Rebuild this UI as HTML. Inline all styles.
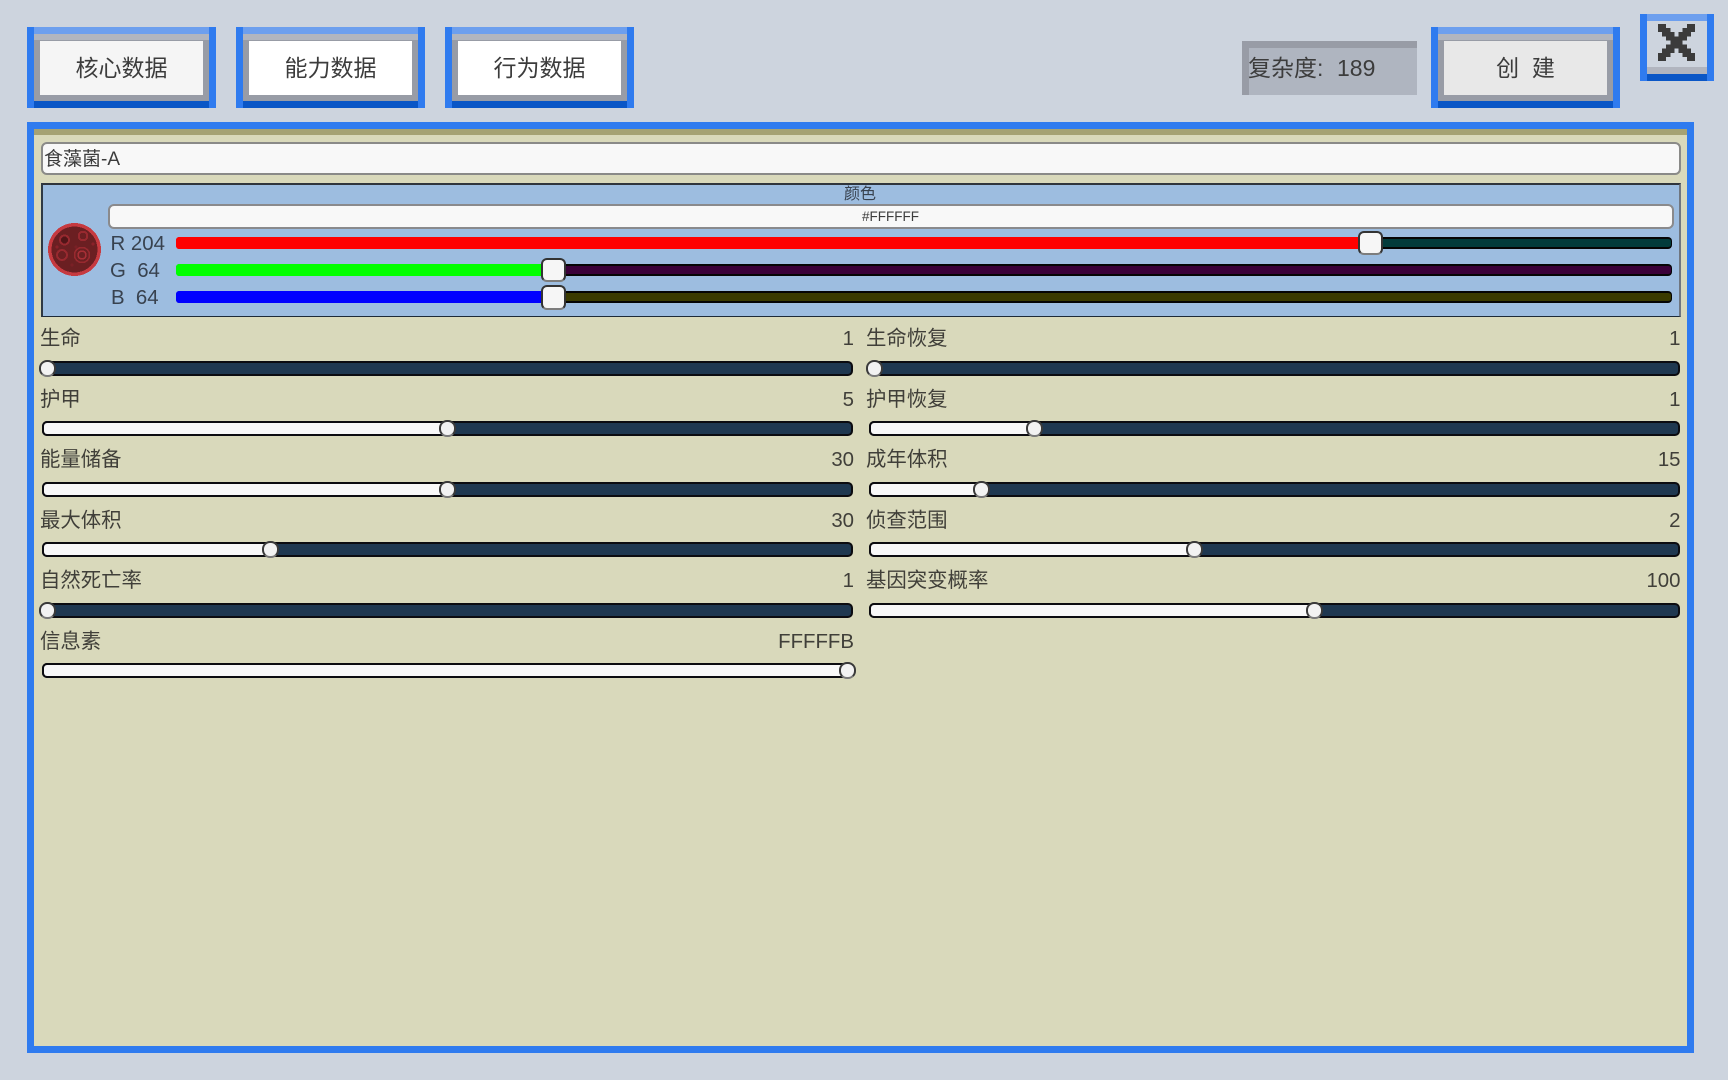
<!DOCTYPE html>
<html lang="zh">
<head>
<meta charset="utf-8">
<title>食藻菌-A</title>
<style>
html,body{margin:0;padding:0;width:1728px;height:1080px;overflow:hidden;background:#cdd4de;}
body{position:relative;font-family:"Liberation Sans","Noto Sans CJK SC",sans-serif;color:#3c3c3c;}
.a{position:absolute;box-sizing:border-box;}
.t{position:absolute;white-space:pre;line-height:1;}
.btn{position:absolute;top:27px;width:189px;height:81px;}
.btn i{position:absolute;display:block;}
.btn .l{left:0;top:0;width:7px;height:81px;background:#2f7bef;}
.btn .r{right:0;top:0;width:7px;height:81px;background:#2f7bef;}
.btn .tp{left:7px;right:7px;top:0;height:7px;background:#6d9fee;}
.btn .bt{left:7px;right:7px;bottom:0;height:7px;background:#0a56c6;}
.btn .g{left:7px;right:7px;top:7px;bottom:7px;background:#989ca6;}
.btn .g2{left:7px;right:7px;top:7px;height:6px;background:#b1b5bf;}
.btn .in{left:13px;right:13px;top:13.5px;bottom:13.5px;background:#f5f5f5;}
.btn span{position:absolute;left:0;right:0;top:28px;text-align:center;font-size:23px;line-height:27px;white-space:pre;}
.track{position:absolute;box-sizing:border-box;height:15px;background:#1f3850;border:2px solid #0c0c10;border-radius:5px;}
.fill{position:absolute;box-sizing:border-box;height:15px;background:#f8f8f8;border:2px solid #0c0c10;border-right:0;border-radius:5px 0 0 5px;}
.th{position:absolute;box-sizing:border-box;width:17px;height:17px;background:#f2f2f2;border:2px solid #3a3a3a;border-bottom-color:#7a7a7a;border-radius:8px;}
.ct{position:absolute;box-sizing:border-box;height:12px;border-radius:4px;border:1px solid #050505;border-width:2px 1px 2px 0;}
.cf{position:absolute;height:12px;border-radius:3px 0 0 3px;}
.ch{position:absolute;box-sizing:border-box;width:25px;height:24.5px;background:#f6f6f6;border:2px solid #333;border-bottom-color:#7d7d7d;border-radius:6px;}
.lb{position:absolute;font-size:20.4px;line-height:24px;white-space:pre;color:#403f39;}
.rt{text-align:right;}
.cl{position:absolute;font-size:20.4px;line-height:24px;white-space:pre;color:#38424f;}
</style>
</head>
<body>

<div class="btn" style="left:27px"><i class="g"></i><i class="g2"></i><i class="l"></i><i class="r"></i><i class="tp"></i><i class="bt"></i><i class="in"></i><span>核心数据</span></div>
<div class="btn" style="left:236px"><i class="g"></i><i class="g2"></i><i class="l"></i><i class="r"></i><i class="tp"></i><i class="bt"></i><i class="in" style="background:#fff"></i><span>能力数据</span></div>
<div class="btn" style="left:445px"><i class="g"></i><i class="g2"></i><i class="l"></i><i class="r"></i><i class="tp"></i><i class="bt"></i><i class="in" style="background:#fff"></i><span>行为数据</span></div>

<div class="a" style="left:1242px;top:41px;width:175px;height:54px;background:#afb5c0;"></div>
<div class="a" style="left:1242px;top:41px;width:175px;height:6.5px;background:#989ca6;"></div>
<div class="a" style="left:1242px;top:41px;width:6.5px;height:54px;background:#989ca6;"></div>
<div class="t" style="left:1248px;top:56px;font-size:23px;line-height:24px;">复杂度:</div>
<div class="t" style="left:1337px;top:56px;font-size:23px;line-height:24px;">189</div>

<div class="btn" style="left:1431px;"><i class="g"></i><i class="g2"></i><i class="l"></i><i class="r"></i><i class="tp"></i><i class="bt"></i><i class="in" style="background:#e8e8e8"></i><span>创  建</span></div>

<div class="a" style="left:1640px;top:13.5px;width:74px;height:67.5px;background:#cdd4de;">
  <div class="a" style="left:0;top:0;width:7px;height:67.5px;background:#2f7bef;"></div>
  <div class="a" style="right:0;top:0;width:7px;height:67.5px;background:#2f7bef;"></div>
  <div class="a" style="left:7px;right:7px;top:0;height:7px;background:#6d9fee;"></div>
  <div class="a" style="left:7px;right:7px;bottom:7px;height:7px;background:#b1b5bf;"></div>
  <div class="a" style="left:7px;right:7px;bottom:0;height:7px;background:#0a56c6;"></div>
  <svg class="a" style="left:18px;top:10px" width="37" height="37" viewBox="0 0 9 9" shape-rendering="crispEdges"><path fill="#3b3b3b" d="M0 0h2v1h-2zM7 0h2v1h-2zM0 1h3v1h-3zM6 1h3v1h-3zM1 2h3v1h-3zM5 2h3v1h-3zM2 3h5v1h-5zM3 4h3v1h-3zM2 5h5v1h-5zM1 6h3v1h-3zM5 6h3v1h-3zM0 7h3v1h-3zM6 7h3v1h-3zM0 8h2v1h-2zM7 8h2v1h-2z"/></svg>
</div>

<!-- main panel -->
<div class="a" style="left:27px;top:121.5px;width:1667px;height:931.5px;background:#d9d9bb;border:7px solid #2f7bef;"></div>
<div class="a" style="left:34px;top:128.5px;width:1653px;height:6.5px;background:#a5a274;"></div>

<div class="a" style="left:41px;top:142px;width:1640px;height:33px;background:#f8f8f8;border:2px solid #8a8a88;border-radius:6px;"></div>
<div class="t" style="left:44px;top:149px;font-size:19px;line-height:22px;">食藻菌-A</div>

<!-- colour panel -->
<div class="a" style="left:41px;top:182.5px;width:1639.5px;height:134.5px;background:#9dbde0;border-style:solid;border-width:2px 2px 1.5px 2px;border-color:#30353c #6f7680 #1d2a38 #2f3944;"></div>
<div class="t" style="left:844px;top:184.5px;font-size:16px;line-height:20px;color:#38424f;">颜色</div>
<div class="a" style="left:108px;top:203.5px;width:1566px;height:25.5px;background:#f8f8f8;border:2px solid #8a8a8c;border-radius:6px;"></div>
<div class="t" style="left:862px;top:208.5px;font-size:13.5px;line-height:16px;color:#3c3c3c;">#FFFFFF</div>

<svg class="a" style="left:48px;top:222px" width="55" height="56" viewBox="0 0 55 56" shape-rendering="crispEdges">
  <circle cx="26.5" cy="27.5" r="26.5" fill="#c63a40"/>
  <circle cx="26.5" cy="27.5" r="23" fill="#6b1f22"/>
  <circle cx="16.5" cy="18" r="4.5" fill="#521518" stroke="#98292f" stroke-width="2"/>
  <rect x="31" y="10" width="8" height="8" rx="3" fill="none" stroke="#98292f" stroke-width="2"/>
  <circle cx="14" cy="33" r="5" fill="none" stroke="#98292f" stroke-width="2"/>
  <circle cx="34" cy="33" r="7.5" fill="none" stroke="#98292f" stroke-width="1.5"/>
  <circle cx="34" cy="33" r="4" fill="none" stroke="#a82f36" stroke-width="1.5"/>
  <circle cx="45" cy="22" r="1.5" fill="#8a2229"/>
  <circle cx="28" cy="25" r="1.5" fill="#7a2026"/>
  <circle cx="24" cy="43" r="1.5" fill="#7a2026"/>
  <circle cx="9" cy="25" r="1.5" fill="#8a2229"/>
</svg>

<div class="cl" style="left:110.5px;top:232px;">R 204</div>
<div class="cl" style="left:110px;top:258.5px;">G  64</div>
<div class="cl" style="left:111px;top:285.5px;">B  64</div>

<div class="ct" style="left:176px;top:237px;width:1496px;background:#023b3b;"></div>
<div class="cf" style="left:176px;top:237px;width:1184px;background:#ff0000;"></div>
<div class="ch" style="left:1358px;top:230.5px;"></div>

<div class="ct" style="left:176px;top:264px;width:1496px;background:#3a0038;"></div>
<div class="cf" style="left:176px;top:264px;width:367px;background:#00ff00;"></div>
<div class="ch" style="left:541px;top:257.5px;"></div>

<div class="ct" style="left:176px;top:291px;width:1496px;background:#3a3a00;"></div>
<div class="cf" style="left:176px;top:291px;width:367px;background:#0000ff;"></div>
<div class="ch" style="left:541px;top:285px;"></div>

<!-- left column -->
<div class="lb" style="left:40px;top:327px;">生命</div><div class="lb rt" style="left:654px;width:200px;top:327px;">1</div>
<div class="track" style="left:41.5px;top:360.5px;width:811.5px;"></div>
<div class="th" style="left:38.5px;top:359.5px;"></div>

<div class="lb" style="left:40px;top:387.5px;">护甲</div><div class="lb rt" style="left:654px;width:200px;top:387.5px;">5</div>
<div class="track" style="left:41.5px;top:421px;width:811.5px;"></div>
<div class="fill" style="left:41.5px;top:421px;width:407px;"></div>
<div class="th" style="left:438.5px;top:420px;"></div>

<div class="lb" style="left:40px;top:448px;">能量储备</div><div class="lb rt" style="left:654px;width:200px;top:448px;">30</div>
<div class="track" style="left:41.5px;top:481.5px;width:811.5px;"></div>
<div class="fill" style="left:41.5px;top:481.5px;width:407px;"></div>
<div class="th" style="left:438.5px;top:480.5px;"></div>

<div class="lb" style="left:40px;top:508.5px;">最大体积</div><div class="lb rt" style="left:654px;width:200px;top:508.5px;">30</div>
<div class="track" style="left:41.5px;top:542px;width:811.5px;"></div>
<div class="fill" style="left:41.5px;top:542px;width:230px;"></div>
<div class="th" style="left:261.5px;top:541px;"></div>

<div class="lb" style="left:40px;top:569px;">自然死亡率</div><div class="lb rt" style="left:654px;width:200px;top:569px;">1</div>
<div class="track" style="left:41.5px;top:602.5px;width:811.5px;"></div>
<div class="th" style="left:38.5px;top:601.5px;"></div>

<div class="lb" style="left:40px;top:629.5px;">信息素</div><div class="lb rt" style="left:654px;width:200px;top:629.5px;">FFFFFB</div>
<div class="track" style="left:41.5px;top:663px;width:811.5px;"></div>
<div class="fill" style="left:41.5px;top:663px;width:808px;"></div>
<div class="th" style="left:839px;top:662px;"></div>

<!-- right column -->
<div class="lb" style="left:866px;top:327px;">生命恢复</div><div class="lb rt" style="left:1480.5px;width:200px;top:327px;">1</div>
<div class="track" style="left:868.5px;top:360.5px;width:811px;"></div>
<div class="th" style="left:865.5px;top:359.5px;"></div>

<div class="lb" style="left:866px;top:387.5px;">护甲恢复</div><div class="lb rt" style="left:1480.5px;width:200px;top:387.5px;">1</div>
<div class="track" style="left:868.5px;top:421px;width:811px;"></div>
<div class="fill" style="left:868.5px;top:421px;width:167px;"></div>
<div class="th" style="left:1025.5px;top:420px;"></div>

<div class="lb" style="left:866px;top:448px;">成年体积</div><div class="lb rt" style="left:1480.5px;width:200px;top:448px;">15</div>
<div class="track" style="left:868.5px;top:481.5px;width:811px;"></div>
<div class="fill" style="left:868.5px;top:481.5px;width:114px;"></div>
<div class="th" style="left:972.5px;top:480.5px;"></div>

<div class="lb" style="left:866px;top:508.5px;">侦查范围</div><div class="lb rt" style="left:1480.5px;width:200px;top:508.5px;">2</div>
<div class="track" style="left:868.5px;top:542px;width:811px;"></div>
<div class="fill" style="left:868.5px;top:542px;width:326px;"></div>
<div class="th" style="left:1185.5px;top:541px;"></div>

<div class="lb" style="left:866px;top:569px;">基因突变概率</div><div class="lb rt" style="left:1480.5px;width:200px;top:569px;">100</div>
<div class="track" style="left:868.5px;top:602.5px;width:811px;"></div>
<div class="fill" style="left:868.5px;top:602.5px;width:447px;"></div>
<div class="th" style="left:1305.5px;top:601.5px;"></div>

</body>
</html>
